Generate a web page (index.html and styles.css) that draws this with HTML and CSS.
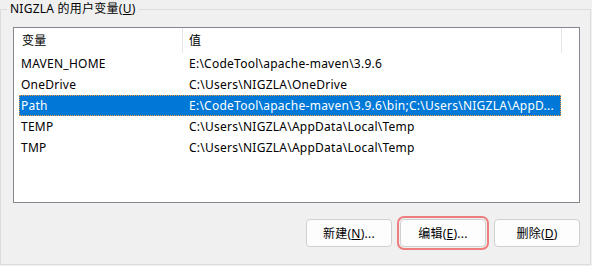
FILE: index.html
```html
<!DOCTYPE html>
<html lang="zh-CN">
<head>
  <meta charset="UTF-8" />
  <title>用户变量</title>
  <link rel="stylesheet" href="styles.css">
</head>
<body>
  <fieldset class="group">
    <legend>NIGZLA 的用户变量(<u>U</u>)</legend>

    <div class="list">
      <div class="list-head">
        <span class="col-name">变量</span>
        <span class="col-value">值</span>
      </div>
      <div class="row"><span class="col-name">MAVEN_HOME</span><span class="col-value">E:\CodeTool\apache-maven\3.9.6</span></div>
      <div class="row"><span class="col-name">OneDrive</span><span class="col-value">C:\Users\NIGZLA\OneDrive</span></div>
      <div class="row selected"><span class="col-name">Path</span><span class="col-value">E:\CodeTool\apache-maven\3.9.6\bin;C:\Users\NIGZLA\AppD...</span></div>
      <div class="row"><span class="col-name">TEMP</span><span class="col-value">C:\Users\NIGZLA\AppData\Local\Temp</span></div>
      <div class="row"><span class="col-name">TMP</span><span class="col-value">C:\Users\NIGZLA\AppData\Local\Temp</span></div>
    </div>

    <div class="actions">
      <button>新建(<u>N</u>)...</button>
      <button class="focused">编辑(<u>E</u>)...</button>
      <button>删除(<u>D</u>)</button>
    </div>
  </fieldset>
</body>
</html>
```

FILE: styles.css
```css
* { box-sizing: border-box; }
html, body { margin: 0; padding: 0; }
body {
  font-family: "Noto Sans", "Noto Sans CJK SC", sans-serif;
  font-size: 12px;
  letter-spacing: 0.25px;
  color: #000;
  background: #f0f0f0;
  width: 592px; height: 266px;
  overflow: hidden;
}

.group {
  margin: 0;
  width: 591px; height: 265px;
  border: 1px solid #dcdcdc;
  padding: 9px 10px 0 12px;
}
.group legend {
  margin-left: -6px;
  padding: 0 3px;
  line-height: 18px;
  height: 18px;
}

.list {
  width: 567px; height: 176px;
  background: #fff;
  border: 1px solid #828790;
}
.list-head {
  display: grid;
  grid-template-columns: 164px 379px;
  margin-left: 5px;
  height: 25px;
}
.list-head span {
  line-height: 25px;
  border-right: 1px solid #e5e5e5;
}
.list-head .col-name { padding-left: 3px; }
.list-head .col-value { padding-left: 6px; }

.row {
  display: grid;
  grid-template-columns: 163px 379px;
  margin-left: 5px;
  width: 542px;
  height: 21px;
  line-height: 21px;
  white-space: nowrap;
}
.row span { overflow: hidden; }
.row .col-name { padding-left: 2px; }
.row .col-value { padding-left: 7px; }
.row.selected {
  background: #0078d7;
  color: #fff;
  outline: 1px dotted #f39a3c;
  outline-offset: -1px;
}

.actions {
  display: flex;
  justify-content: flex-end;
  gap: 8px;
  margin-top: 16px;
  width: 567px;
}
.actions button {
  width: 86px; height: 28px;
  font: inherit;
  letter-spacing: inherit;
  color: #000;
  background: #fdfdfd;
  border: 1px solid #d0d0d0;
  border-radius: 4px;
  padding: 0;
}
.actions button.focused {
  outline: 2px solid #ee7d7d;
  outline-offset: 1px;
}
```
